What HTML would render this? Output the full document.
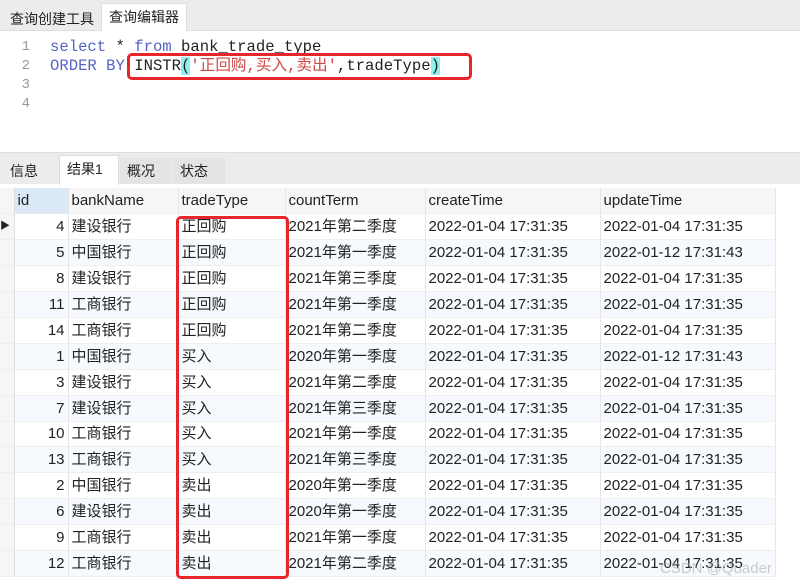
<!DOCTYPE html>
<html><head><meta charset="utf-8"><style>
*{margin:0;padding:0;box-sizing:border-box}
body{width:800px;height:585px;background:#fff;font-family:"Liberation Sans","Noto Sans CJK SC",sans-serif;font-size:14px;color:#222;position:relative;overflow:hidden}
.topbar{position:absolute;left:0;top:0;width:800px;height:31px;background:#ececec;border-bottom:1px solid #ddd}
.tab{position:absolute;top:5px;height:26px;line-height:26px;padding:0 7px;font-size:14px;color:#222}
.editor{position:absolute;left:0;top:31px;width:800px;height:120px;background:#fff;font-family:"Liberation Mono","Noto Sans CJK SC",monospace;font-size:15.6px;line-height:19px}
.ln{position:absolute;left:0;width:40px;text-align:right;padding-right:10px;color:#999;font-size:14px}
.code{position:absolute;left:50px;white-space:pre}
.kw{color:#5563c4}
.str{color:#d04848}
.cy{background:#8ff0f0}
.rbar{position:absolute;left:0;top:152px;width:800px;height:32px;background:#ececec;border-top:1px solid #ddd}
table{position:absolute;left:0;top:188px;border-collapse:collapse;font-size:15px;table-layout:fixed}
td{height:25.9px;padding:0 3px;border-right:1px solid #e6e6e6;border-bottom:1px solid #eee;white-space:nowrap;overflow:visible;line-height:17px;vertical-align:middle}
td span{display:inline-block;line-height:17px;height:17px;vertical-align:top}
tr.h td{background:#f6f6f6;color:#222}
tr.o td{background:#f6fafe}
td.ind{padding:0;background:#f6f6f6!important;border-right:1px solid #ddd}
td.id{text-align:right}
.box{position:absolute;border:3px solid #e8262a;border-radius:5px}
</style></head><body>
<div class="topbar">
<div class="tab" style="left:3px;top:6px">查询创建工具</div>
<div class="tab" style="left:101px;top:3px;background:#fff;height:28px;border:1px solid #ddd;border-bottom:none">查询编辑器</div>
</div>
<div class="editor">
<div class="ln" style="top:7px">1</div><div class="code" style="top:7px"><span class="kw">select</span> * <span class="kw">from</span> bank_trade_type</div>
<div class="ln" style="top:26px">2</div><div class="code" style="top:26px"><span class="kw">ORDER BY</span> INSTR<span class="cy">(</span><span class="str">'正回购,买入,卖出'</span>,tradeType<span class="cy">)</span></div>
<div class="ln" style="top:45px">3</div>
<div class="ln" style="top:64px">4</div>
</div>
<div class="rbar">
<div class="tab" style="left:3px;top:5px">信息</div>
<div class="tab" style="left:59px;top:2px;background:#fff;height:30px;border:1px solid #ddd;border-bottom:none;width:60px">结果1</div>
<div class="tab" style="left:120px;top:5px;background:#e4e4e4;width:52px">概况</div>
<div class="tab" style="left:173px;top:5px;background:#e4e4e4;width:52px">状态</div>
</div>
<table style="width:775px">
<colgroup><col style="width:14px"><col style="width:54px"><col style="width:110px"><col style="width:107px"><col style="width:140px"><col style="width:175px"><col style="width:175px"></colgroup>
<tr class="h"><td class="ind"></td><td style="background:#dbe8f5">id</td><td>bankName</td><td>tradeType</td><td>countTerm</td><td>createTime</td><td>updateTime</td></tr>
<tr><td class="ind" style="font-size:10px">▶</td><td class="id">4</td><td>建设银行</td><td>正回购</td><td>2021年第二季度</td><td>2022-01-04 17:31:35</td><td>2022-01-04 17:31:35</td></tr>
<tr class="o"><td class="ind"></td><td class="id">5</td><td>中国银行</td><td>正回购</td><td>2021年第一季度</td><td>2022-01-04 17:31:35</td><td>2022-01-12 17:31:43</td></tr>
<tr><td class="ind"></td><td class="id">8</td><td>建设银行</td><td>正回购</td><td>2021年第三季度</td><td>2022-01-04 17:31:35</td><td>2022-01-04 17:31:35</td></tr>
<tr class="o"><td class="ind"></td><td class="id">11</td><td>工商银行</td><td>正回购</td><td>2021年第一季度</td><td>2022-01-04 17:31:35</td><td>2022-01-04 17:31:35</td></tr>
<tr><td class="ind"></td><td class="id">14</td><td>工商银行</td><td>正回购</td><td>2021年第二季度</td><td>2022-01-04 17:31:35</td><td>2022-01-04 17:31:35</td></tr>
<tr class="o"><td class="ind"></td><td class="id">1</td><td>中国银行</td><td>买入</td><td>2020年第一季度</td><td>2022-01-04 17:31:35</td><td>2022-01-12 17:31:43</td></tr>
<tr><td class="ind"></td><td class="id">3</td><td>建设银行</td><td>买入</td><td>2021年第二季度</td><td>2022-01-04 17:31:35</td><td>2022-01-04 17:31:35</td></tr>
<tr class="o"><td class="ind"></td><td class="id">7</td><td>建设银行</td><td>买入</td><td>2021年第三季度</td><td>2022-01-04 17:31:35</td><td>2022-01-04 17:31:35</td></tr>
<tr><td class="ind"></td><td class="id">10</td><td>工商银行</td><td>买入</td><td>2021年第一季度</td><td>2022-01-04 17:31:35</td><td>2022-01-04 17:31:35</td></tr>
<tr class="o"><td class="ind"></td><td class="id">13</td><td>工商银行</td><td>买入</td><td>2021年第三季度</td><td>2022-01-04 17:31:35</td><td>2022-01-04 17:31:35</td></tr>
<tr><td class="ind"></td><td class="id">2</td><td>中国银行</td><td>卖出</td><td>2020年第一季度</td><td>2022-01-04 17:31:35</td><td>2022-01-04 17:31:35</td></tr>
<tr class="o"><td class="ind"></td><td class="id">6</td><td>建设银行</td><td>卖出</td><td>2020年第一季度</td><td>2022-01-04 17:31:35</td><td>2022-01-04 17:31:35</td></tr>
<tr><td class="ind"></td><td class="id">9</td><td>工商银行</td><td>卖出</td><td>2021年第一季度</td><td>2022-01-04 17:31:35</td><td>2022-01-04 17:31:35</td></tr>
<tr class="o"><td class="ind"></td><td class="id">12</td><td>工商银行</td><td>卖出</td><td>2021年第二季度</td><td>2022-01-04 17:31:35</td><td>2022-01-04 17:31:35</td></tr>
</table>
<div class="box" style="left:127px;top:53px;width:345px;height:27px"></div>
<div class="box" style="left:176px;top:216px;width:113px;height:363px"></div>
<div style="position:absolute;left:660px;top:560px;font-size:15px;color:rgba(170,170,170,0.6)">CSDN @Quader</div>
</body></html>
